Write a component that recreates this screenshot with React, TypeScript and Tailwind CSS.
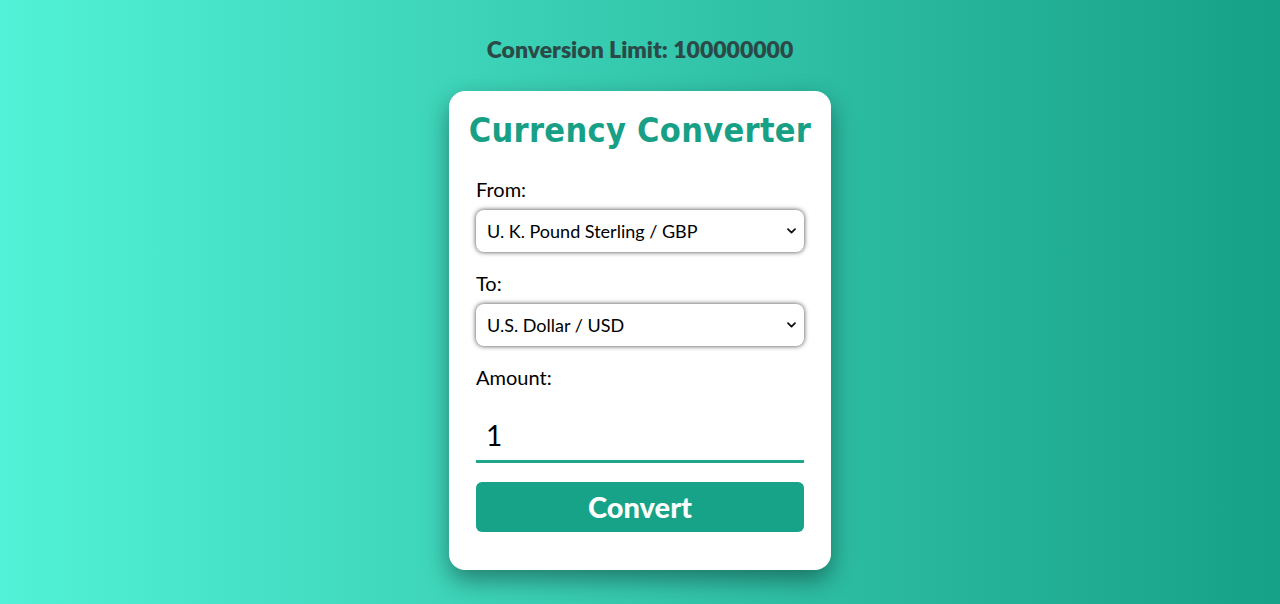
import React from "react";

const Chevron = () => (
  <svg
    className="pointer-events-none absolute right-[8px] top-1/2 -translate-y-1/2"
    width="9"
    height="6"
    viewBox="0 0 9 6"
    fill="none"
  >
    <path d="M1 1.2 L4.5 4.6 L8 1.2" stroke="#111" strokeWidth="1.8" strokeLinecap="round" strokeLinejoin="round" />
  </svg>
);

function Select({ value }: { value: string }) {
  return (
    <div className="relative h-[42px] w-full">
      <select
        defaultValue={value}
        className="h-full w-full appearance-none rounded-[8px] border-0 bg-white pl-[11px] text-[18px] text-black shadow-[0_0_5px_rgba(0,0,0,0.75)] outline-none"
        style={{ fontFamily: "Lato, 'Noto Sans', sans-serif" }}
      >
        <option>{value}</option>
      </select>
      <Chevron />
    </div>
  );
}

export default function App() {
  return (
    <div
      className="flex min-h-[604px] w-full flex-col items-center bg-gradient-to-r from-[#51f2d7] to-[#14a187]"
      style={{ fontFamily: "Lato, 'Noto Sans', sans-serif" }}
    >
      <div className="mt-[35px] h-[28px] text-[23px] font-extrabold leading-[28px] text-[#2b4a47]">
        Conversion Limit: 100000000
      </div>
      <div className="mt-[28px] flex w-[382px] flex-col rounded-[16px] bg-white px-[27px] pb-[38px] pt-[19px] shadow-[0_10px_24px_rgba(0,0,0,0.4)]">
        <h1
          className="-mx-[12px] whitespace-nowrap text-center text-[34px] font-bold leading-[40px] tracking-[0.3px] text-[#17a086]"
          style={{ fontFamily: "'DejaVu Sans Condensed', 'DejaVu Sans', sans-serif" }}
        >
          Currency Converter
        </h1>
        <label className="mt-[27px] text-[20px] leading-[24px] text-black">From:</label>
        <div className="mt-[9px]">
          <Select value="U. K. Pound Sterling / GBP" />
        </div>
        <label className="mt-[19px] text-[20px] leading-[24px] text-black">To:</label>
        <div className="mt-[9px]">
          <Select value="U.S. Dollar / USD" />
        </div>
        <label className="mt-[19px] text-[20px] leading-[24px] text-black">Amount:</label>
        <input
          defaultValue="1"
          className="mt-[12px] h-[62px] w-full border-0 border-b-[3px] border-[#1fa58b] bg-transparent px-[10px] pt-[8px] text-[28px] text-black outline-none"
          style={{ fontFamily: "Lato, 'Noto Sans', sans-serif" }}
        />
        <button className="mt-[19px] h-[50px] w-full rounded-[6px] bg-[#16a388] text-[29px] font-black text-white">
          Convert
        </button>
      </div>
    </div>
  );
}
